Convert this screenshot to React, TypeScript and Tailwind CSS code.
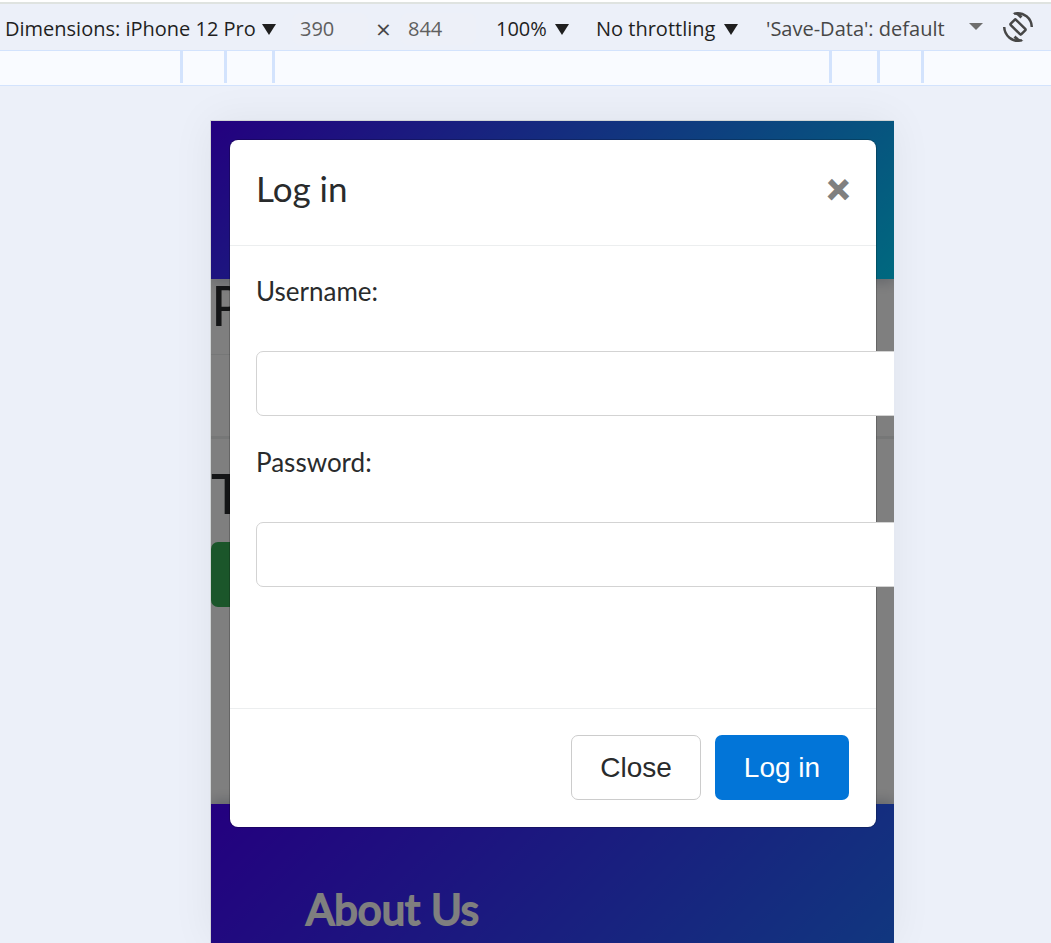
import type { ReactNode } from "react";

function Triangle({ className }: { className: string }) {
  return (
    <svg viewBox="0 0 14 11" preserveAspectRatio="none" aria-hidden="true" className={`pointer-events-none shrink-0 ${className}`}>
      <path d="M0 0H14L7 11Z" fill="currentColor" />
    </svg>
  );
}

function ToolbarSelect({
  label,
  value,
  className = "",
  arrow,
}: {
  label: string;
  value: string;
  className?: string;
  arrow: ReactNode;
}) {
  return (
    <label className={`flex shrink-0 items-center ${className}`}>
      <select aria-label={label} defaultValue={value} className="appearance-none bg-transparent outline-none">
        <option>{value}</option>
      </select>
      {arrow}
    </label>
  );
}

function RotateIcon() {
  return (
    <svg viewBox="0 0 32 32" fill="none" stroke="currentColor" strokeWidth="2.5" aria-hidden="true" className="size-8">
      <rect x="-3.700" y="-7.500" width="7.400" height="15" rx="1" transform="translate(16 16) rotate(-45)" />
      <path d="M12 2.600C22 0.500 29.500 7.500 29.800 16" />
      <path d="M10.500 2.600L16 1.200L20.500 5.200L18.500 7.400L15 4.200Z" fill="currentColor" stroke="none" />
      <path d="M20 29.400C10 31.500 2.500 24.500 2.200 16" />
      <path d="M21.500 29.400L16 30.800L11.500 26.800L13.500 24.600L17 27.800Z" fill="currentColor" stroke="none" />
    </svg>
  );
}

function Toolbar() {
  return (
    <div className="flex h-[49px] shrink-0 items-center border-t-2 border-b border-t-[#dfe3e0] border-b-[#d3e3fd] bg-[#ecf0f9] pt-[3px] pl-[5px] text-[20px] text-[#1f1f1f]">
      <ToolbarSelect
        label="Device"
        value="Dimensions: iPhone 12 Pro"
        className="w-[287px] gap-[6px]"
        arrow={<Triangle className="mt-[2px] h-[11px] w-[14px]" />}
      />
      <input aria-label="Width" defaultValue="390" className="h-8 w-[76px] shrink-0 rounded-lg bg-[#edf0f8] px-2 text-[#5f5f5f]" />
      <span className="w-[32px] shrink-0 pl-[8px] text-[26px] leading-8 text-[#474747]">×</span>
      <input aria-label="Height" defaultValue="844" className="h-8 w-[76px] shrink-0 rounded-lg bg-[#edf0f8] px-2 text-[#5f5f5f]" />
      <ToolbarSelect
        label="Zoom"
        value="100%"
        className="ml-[20px] w-[100px] gap-2"
        arrow={<Triangle className="mt-[2px] h-[11px] w-[14px]" />}
      />
      <ToolbarSelect
        label="Throttling"
        value="No throttling"
        className="w-[170px] gap-2"
        arrow={<Triangle className="mt-[2px] h-[11px] w-[14px]" />}
      />
      <ToolbarSelect
        label="Save-Data"
        value="'Save-Data': default"
        className="w-[217px] justify-between text-[#474747]"
        arrow={<Triangle className="mb-1 h-[7px] w-[14px] text-[#6e6e6e]" />}
      />
      <button aria-label="Rotate" className="ml-[19px] shrink-0 pb-1 text-[#474747]">
        <RotateIcon />
      </button>
    </div>
  );
}

function Ruler() {
  return (
    <div className="flex h-[35px] shrink-0 justify-center border-b border-[#d3e3fd] bg-[#f9fbff] pb-[2px] pl-[53px]">
      <div className="flex w-[744px] border-x-[3px] border-[#d3e3fd] px-[41px]">
        <div className="flex grow border-x-[3px] border-[#d3e3fd] px-[45px]">
          <div className="grow border-x-[3px] border-[#d3e3fd]" />
        </div>
      </div>
    </div>
  );
}

function Storefront() {
  return (
    <div className="flex flex-col bg-white text-[#292b2c]">
      <header className="z-0 h-[158px] bg-[linear-gradient(135deg,#4800ff,#00d2ff)] shadow-[0_4px_12px_rgba(0,20,60,0.2)]" />
      <main className="h-[525px]">
        <h2 className="h-[76px] border-b border-[#eceeef] text-[56px] leading-[52px]">P</h2>
        <div className="h-[84px] border-b-[3px] border-[#eceeef]" />
        <h3 className="mt-[26px] text-[56px] leading-[56px] font-medium">T</h3>
        <button aria-label="Buy" className="mt-[21px] h-[65px] w-[120px] rounded-[7px] bg-[#36ac54]" />
      </main>
      <footer className="h-[887px] bg-[linear-gradient(135deg,#4800ff,#00d2ff)] px-[95px] pt-[78px] shadow-[0_-4px_12px_rgba(0,20,60,0.2)]">
        <h4 className="text-[42px] leading-[54px] text-white [-webkit-text-stroke:2px_white]">About Us</h4>
      </footer>
    </div>
  );
}

function Field({ id, label, type }: { id: string; label: string; type: string }) {
  return (
    <div className="flex flex-col gap-[41px]">
      <label htmlFor={id} className="text-[26px] leading-[38px]">
        {label}
      </label>
      <input id={id} type={type} className="h-[65px] w-[700px] rounded-[7px] border border-[#d3d3d3] bg-white px-5 text-[26px]" />
    </div>
  );
}

function LoginDialog() {
  return (
    <div
      role="dialog"
      aria-labelledby="login-title"
      className="rounded-[8px] bg-white text-[#292b2c] shadow-[0_0_0_1px_rgba(0,0,0,0.2)]"
    >
      <div className="flex h-[106px] items-center justify-between border-b border-[#eceeef] px-[26px] pb-[9px]">
        <h1 id="login-title" className="text-[35px] leading-[52px]">
          Log in
        </h1>
        <button aria-label="Close dialog" className="text-[40px] leading-[42px] font-bold text-[#808080] [-webkit-text-stroke:2px_#808080]">
          ×
        </button>
      </div>
      <form className="flex h-[462px] flex-col gap-[27px] pt-[26px] pl-[26px]">
        <Field id="username" label="Username:" type="text" />
        <Field id="password" label="Password:" type="password" />
      </form>
      <div className="flex justify-end gap-[14px] border-t border-[#eceeef] p-[26px] pr-[27px] pb-[27px] font-['Liberation_Sans',Arial,sans-serif] text-[28px]">
        <button className="h-[65px] w-[130px] rounded-[7px] border border-[#cccccc] bg-white">Close</button>
        <button className="h-[65px] w-[134px] rounded-[7px] bg-[#0275d8] text-white">Log in</button>
      </div>
    </div>
  );
}

export default function App() {
  return (
    <div className="flex h-screen flex-col overflow-hidden bg-[#ecf0f9] font-['Open_Sans',sans-serif]">
      <div className="h-[2px] shrink-0 bg-white" />
      <Toolbar />
      <Ruler />
      <div className="flex min-h-0 grow justify-center overflow-hidden pt-[34px] pl-[53px]">
        <div className="w-[684px] border-t border-l border-[#d0d4d6] font-[Lato,sans-serif] shadow-[0_0_40px_rgba(0,0,0,0.06)]">
          <div className="relative h-full overflow-hidden">
            <Storefront />
            <div className="absolute inset-0 overflow-hidden bg-black/50 pt-[19px] pr-[18px] pl-[19px]">
              <LoginDialog />
            </div>
          </div>
        </div>
      </div>
    </div>
  );
}
